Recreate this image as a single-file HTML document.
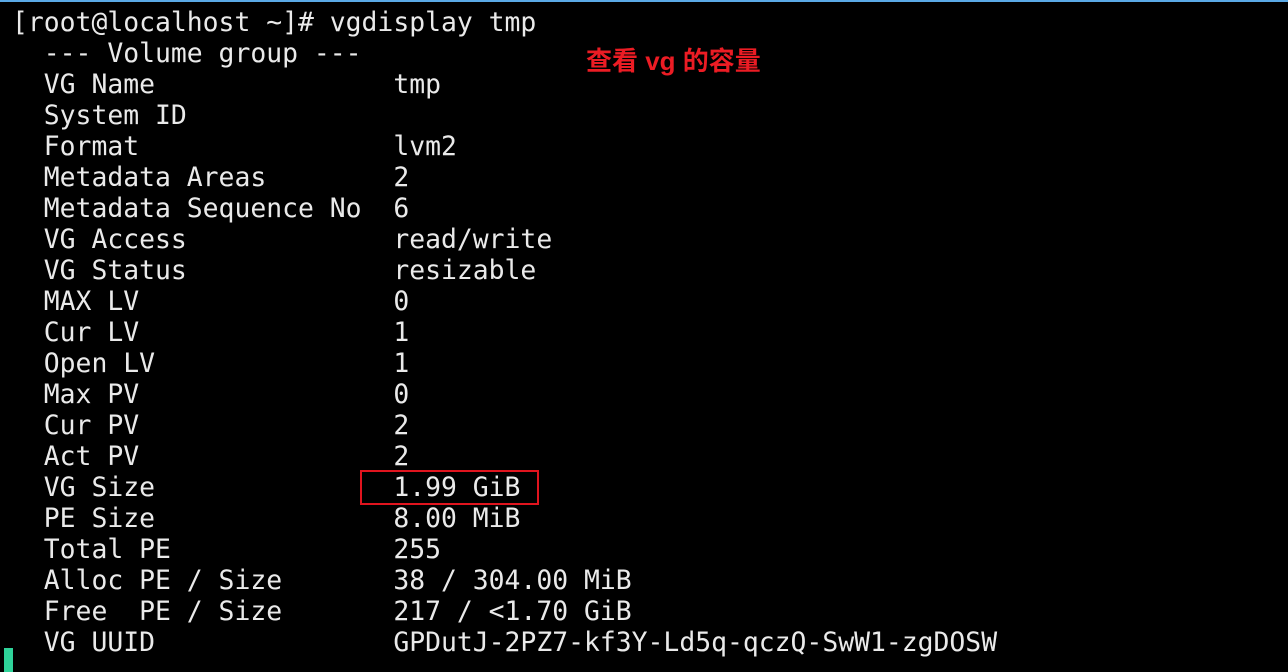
<!DOCTYPE html>
<html><head><meta charset="utf-8"><style>
html,body{margin:0;padding:0;background:#000;width:1288px;height:672px;overflow:hidden;position:relative}
.top{position:absolute;left:0;top:0;width:1288px;height:2px;background:#5aa9e6}
pre{position:absolute;left:12px;top:7px;margin:0;font-family:"DejaVu Sans Mono",monospace;font-size:26.4px;line-height:31px;color:#eaeaea}
.note{position:absolute;left:586px;top:46px;font-family:"Liberation Sans","Noto Sans CJK SC",sans-serif;font-weight:bold;font-size:26px;color:#ec1c24;line-height:30px}
.box{position:absolute;left:360px;top:470px;width:175px;height:31px;border:2px solid #e0141e}
.cur{position:absolute;left:4px;top:648px;width:9px;height:24px;background:#2fd39a}
</style></head><body>
<div class="top"></div>
<pre>[root@localhost ~]# vgdisplay tmp
  --- Volume group ---
  VG Name               tmp
  System ID
  Format                lvm2
  Metadata Areas        2
  Metadata Sequence No  6
  VG Access             read/write
  VG Status             resizable
  MAX LV                0
  Cur LV                1
  Open LV               1
  Max PV                0
  Cur PV                2
  Act PV                2
  VG Size               1.99 GiB
  PE Size               8.00 MiB
  Total PE              255
  Alloc PE / Size       38 / 304.00 MiB
  Free  PE / Size       217 / &lt;1.70 GiB
  VG UUID               GPDutJ-2PZ7-kf3Y-Ld5q-qczQ-SwW1-zgDOSW</pre>
<div class="note">查看 vg 的容量</div>
<div class="box"></div>
<div class="cur"></div>
</body></html>
